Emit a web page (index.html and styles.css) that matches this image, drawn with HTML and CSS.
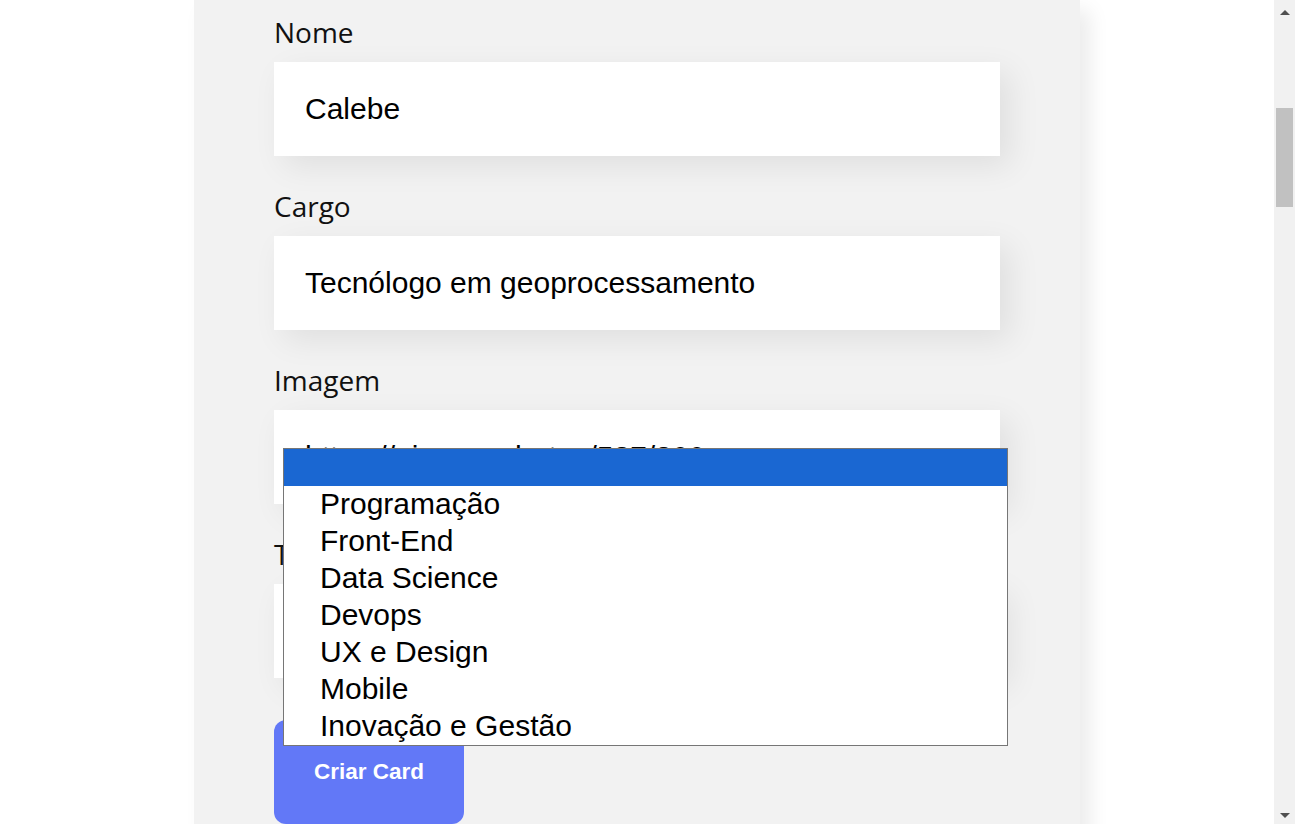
FILE: index.html
```html
<!DOCTYPE html>
<html lang="pt-BR">
<head>
<meta charset="utf-8">
<title>Organo</title>
<link rel="stylesheet" href="styles.css">
</head>
<body>
<main class="page">
  <section class="form-wrap">
    <form class="form">
      <div class="field">
        <label class="label">Nome</label>
        <input class="text-input" type="text" value="Calebe">
      </div>
      <div class="field">
        <label class="label">Cargo</label>
        <input class="text-input" type="text" value="Tecnólogo em geoprocessamento">
      </div>
      <div class="field">
        <label class="label">Imagem</label>
        <input class="text-input" type="text" value="https://picsum.photos/537/300">
      </div>
      <div class="field">
        <label class="label">Time</label>
        <div class="select-wrap">
          <div class="select-box"></div>
          <ul class="listbox">
            <li class="option selected"></li>
            <li class="option">Programação</li>
            <li class="option">Front-End</li>
            <li class="option">Data Science</li>
            <li class="option">Devops</li>
            <li class="option">UX e Design</li>
            <li class="option">Mobile</li>
            <li class="option">Inovação e Gestão</li>
          </ul>
        </div>
      </div>
      <button class="btn" type="button">Criar Card</button>
    </form>
  </section>
</main>
<aside class="scrollbar">
  <div class="sb-btn"><span class="arrow-up"></span></div>
  <div class="sb-track"><div class="sb-thumb"></div></div>
  <div class="sb-btn"><span class="arrow-down"></span></div>
</aside>
</body>
</html>
```

FILE: styles.css
```css
* { box-sizing: border-box; }

html, body {
  margin: 0;
  padding: 0;
  height: 824px;
  overflow: hidden;
  background: #ffffff;
}

body {
  display: flex;
  font-family: "Liberation Sans", Arial, sans-serif;
}

.page {
  flex: 1;
  display: flex;
  justify-content: center;
  overflow: hidden;
  background: #ffffff;
}

.form-wrap {
  width: 886px;
}

.form {
  background: #f2f2f2;
  padding: 13px 80px 40px;
  border-radius: 0 0 25px 25px;
  box-shadow: 10px 10px 20px rgba(0, 0, 0, 0.08);
  min-height: 900px;
}

.field {
  display: flex;
  flex-direction: column;
  margin-bottom: 31px;
}

.label {
  font-family: "Open Sans", "Noto Sans", sans-serif;
  font-size: 28px;
  line-height: 38px;
  color: #111111;
  margin-bottom: 11px;
}

.text-input {
  display: block;
  width: 100%;
  height: 94px;
  border: none;
  outline: none;
  background: #ffffff;
  padding: 0 31px;
  font-family: "Liberation Sans", Arial, sans-serif;
  font-size: 30px;
  color: #000000;
  box-shadow: 10px 10px 30px rgba(0, 0, 0, 0.08);
}

.select-wrap {
  position: relative;
}

.select-box {
  height: 94px;
  background: #ffffff;
  box-shadow: 10px 10px 30px rgba(0, 0, 0, 0.08);
}

.listbox {
  position: absolute;
  top: -136px;
  left: 9px;
  width: 725px;
  margin: 0;
  padding: 0;
  list-style: none;
  background: #ffffff;
  border: 1px solid #767676;
  z-index: 5;
}

.option {
  height: 37px;
  line-height: 35px;
  padding-left: 36px;
  font-family: "Liberation Sans", Arial, sans-serif;
  font-size: 30px;
  color: #000000;
  white-space: nowrap;
}

.option.selected {
  background: #1a67d2;
}

.btn {
  margin-top: 11px;
  background: #6278f7;
  color: #ffffff;
  border: none;
  border-radius: 12px;
  padding: 40px;
  font-family: "Liberation Sans", Arial, sans-serif;
  font-weight: 700;
  font-size: 22.5px;
  line-height: 24px;
}

.scrollbar {
  width: 21px;
  height: 824px;
  background: #f1f1f1;
  display: flex;
  flex-direction: column;
}

.sb-btn {
  height: 21px;
  display: flex;
  align-items: center;
  justify-content: center;
}

.arrow-up {
  width: 0;
  height: 0;
  border-left: 5px solid transparent;
  border-right: 5px solid transparent;
  border-bottom: 5px solid #505050;
  margin-top: 3px;
}

.arrow-down {
  width: 0;
  height: 0;
  border-left: 5px solid transparent;
  border-right: 5px solid transparent;
  border-top: 5px solid #505050;
  margin-top: 3px;
}

.sb-track {
  flex: 1;
  padding-top: 87px;
  display: flex;
  justify-content: center;
}

.sb-thumb {
  width: 17px;
  height: 99px;
  background: #c1c1c1;
}
```
